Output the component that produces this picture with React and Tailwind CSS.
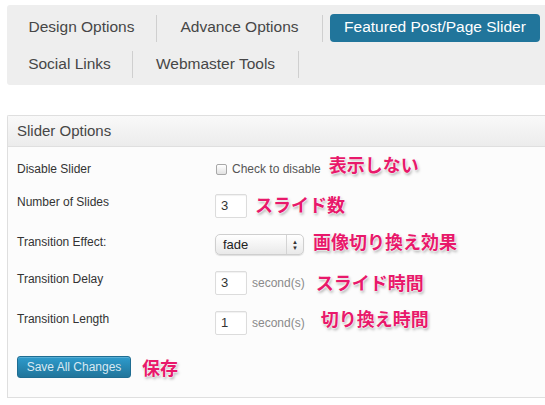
const jp =
  "ml-[8px] text-[18px] leading-[22px] font-bold text-[#e8196b] [font-family:'Noto_Sans_CJK_JP',sans-serif] [text-shadow:0_0_1px_#fff,0_0_2px_#fff,0_0_2px_#fff,1px_2px_3px_rgba(0,0,0,0.35)]";

const Sep = () => <div className="w-px h-[27px] bg-[#cfcfcf]" />;

const Tab = ({ w, children }) => (
  <div className={`${w} h-[27px] flex items-center justify-center pb-[2px] text-[15.5px] text-[#464646]`}>
    {children}
  </div>
);

const NumberBox = ({ value }) => (
  <div className="w-[32px] h-[24px] border border-[#dcdcdc] bg-white rounded-[2px] pl-[5px] flex items-center text-[13px] text-[#333] shadow-[inset_0_1px_1px_rgba(0,0,0,0.06)]">
    {value}
  </div>
);

const Row = ({ h, label, children }) => (
  <div className={`${h} flex items-start`}>
    <div className="w-[198px] shrink-0 text-[12px] leading-4 text-[#333]">{label}</div>
    <div className="flex items-center">{children}</div>
  </div>
);

export default function App() {
  return (
    <div className="w-[545px] h-[405px] overflow-hidden bg-white pt-[5px] [font-family:'Liberation_Sans',Arial,sans-serif]">
      {/* tabs */}
      <div className="ml-[7px] h-[80px] bg-[#eeeeee] rounded-l-[3px] pt-[9px] flex flex-col gap-[9px]">
        <div className="flex items-center">
          <Tab w="w-[149px]">Design Options</Tab>
          <Sep />
          <Tab w="w-[165px]">Advance Options</Tab>
          <Sep />
          <div className="ml-[7px] w-[210px] h-[28px] rounded-[4px] bg-[#21759b] flex items-center justify-center pb-[2px] text-[15.5px] text-white">
            Featured Post/Page Slider
          </div>
        </div>
        <div className="flex items-center">
          <Tab w="w-[125px]">Social Links</Tab>
          <Sep />
          <Tab w="w-[165px]">Webmaster Tools</Tab>
          <Sep />
        </div>
      </div>

      {/* panel */}
      <div className="ml-[7px] mt-[30px] border border-r-0 border-[#dfdfdf] rounded-tl-[2px] bg-[#fcfcfc]">
        <div className="h-[31px] border-b border-[#dfdfdf] bg-gradient-to-b from-[#f9f9f9] to-[#ececec] pl-[9px] flex items-center text-[15px] text-[#464646]">
          Slider Options
        </div>
        <div className="pl-[9px] pt-[14px] pb-[19px]">
          <Row h="h-[33px]" label="Disable Slider">
            <div className="h-4 flex items-center">
              <div className="ml-px w-[11px] h-[11px] border border-[#a8a8a8] rounded-[2px] bg-gradient-to-b from-white to-[#e2e2e2]" />
              <span className="ml-[5px] text-[12px] text-[#555]">Check to disable</span>
              <span className={`${jp} -mt-[10px]`}>表示しない</span>
            </div>
          </Row>
          <Row h="h-[40px]" label="Number of Slides">
            <NumberBox value="3" />
            <span className={`${jp} ml-[6px] -mt-[4px]`}>スライド数</span>
          </Row>
          <Row h="h-[37px]" label="Transition Effect:">
            <div className="w-[89px] h-[21px] rounded-[5px] border border-[#cfcfcf] bg-gradient-to-b from-white to-[#e9e9e9] shadow-[0_1px_1px_rgba(0,0,0,0.12)] flex items-center">
              <span className="flex-1 pl-[7px] text-[13px] text-[#222]">fade</span>
              <div className="w-px h-full bg-[#d4d4d4]" />
              <div className="w-[16px] flex flex-col items-center justify-center leading-none text-[6px] text-[#333]">
                <span>▲</span>
                <span>▼</span>
              </div>
            </div>
            <span className={`${jp} ml-[9px] -mt-[8px]`}>画像切り換え効果</span>
          </Row>
          <Row h="h-[40px]" label="Transition Delay">
            <NumberBox value="3" />
            <span className="ml-[5px] text-[12px] text-[#8a8a8a]">second(s)</span>
            <span className={`${jp} ml-[11px] -mt-[3px]`}>スライド時間</span>
          </Row>
          <Row h="h-[45px]" label="Transition Length">
            <NumberBox value="1" />
            <span className="ml-[5px] text-[12px] text-[#8a8a8a]">second(s)</span>
            <span className={`${jp} ml-[16px] -mt-[10px]`}>切り換え時間</span>
          </Row>
          <div className="flex items-center">
            <div className="w-[114px] h-[22px] rounded-[3px] border border-[#1f6d92] bg-gradient-to-b from-[#2e9bcc] to-[#21759b] flex items-center justify-center text-[12px] text-[#d8e9f3] shadow-[inset_0_1px_0_rgba(255,255,255,0.2)]">
              Save All Changes
            </div>
            <span className={`${jp} ml-[11px]`}>保存</span>
          </div>
        </div>
      </div>
    </div>
  );
}
